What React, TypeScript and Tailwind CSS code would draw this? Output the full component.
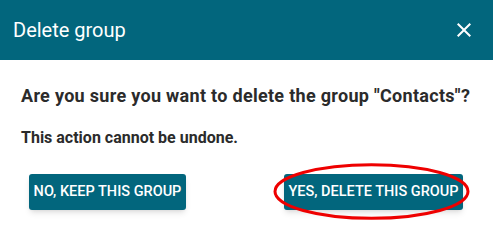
import React from 'react';

// Confirmation dialog for removing a contact group
export default function App() {
  return (
    <div className="w-[493px] h-[238px] bg-white font-['Roboto',sans-serif] overflow-hidden">
      {/* Header */}
      <div className="h-[60px] bg-[#02667d] flex items-center justify-between pl-[13px] pr-[17px]">
        <h1 className="text-[20px] text-white leading-none">Delete group</h1>
        <button className="text-white" aria-label="Close">
          <svg width="24" height="24" viewBox="0 0 24 24" fill="currentColor">
            <path d="M19 6.41 17.59 5 12 10.59 6.41 5 5 6.41 10.59 12 5 17.59 6.41 19 12 13.41 17.59 19 19 17.59 13.41 12z" />
          </svg>
        </button>
      </div>

      {/* Body */}
      <div className="px-[21px] pt-[24px]">
        <p className="text-[18px] leading-[24px] font-bold tracking-[0.3px] text-[#2b2b2b] whitespace-nowrap">
          Are you sure you want to delete the group "Contacts"?
        </p>
        <p className="mt-[20px] text-[16px] leading-[20px] font-bold text-[#2b2b2b]">
          This action cannot be undone.
        </p>
      </div>

      {/* Actions */}
      <div className="mt-[26px] flex justify-between pl-[29px] pr-[30px]">
        <button className="w-[157px] h-[36px] rounded-[3px] bg-[#02667d] text-white text-[14.5px] font-medium uppercase whitespace-nowrap shadow-md">
          No, keep this group
        </button>
        <div className="relative">
          <button className="w-[179px] h-[36px] rounded-[3px] bg-[#02667d] text-white text-[14.5px] font-medium uppercase whitespace-nowrap shadow-md">
            Yes, delete this group
          </button>
          <svg
            className="absolute left-[-11px] top-[-11px] pointer-events-none"
            width="197"
            height="57"
            viewBox="0 0 197 57"
          >
            <ellipse cx="98.5" cy="28.5" rx="96.5" ry="26.8" fill="none" stroke="#ee0000" strokeWidth="3" />
          </svg>
        </div>
      </div>
    </div>
  );
}
